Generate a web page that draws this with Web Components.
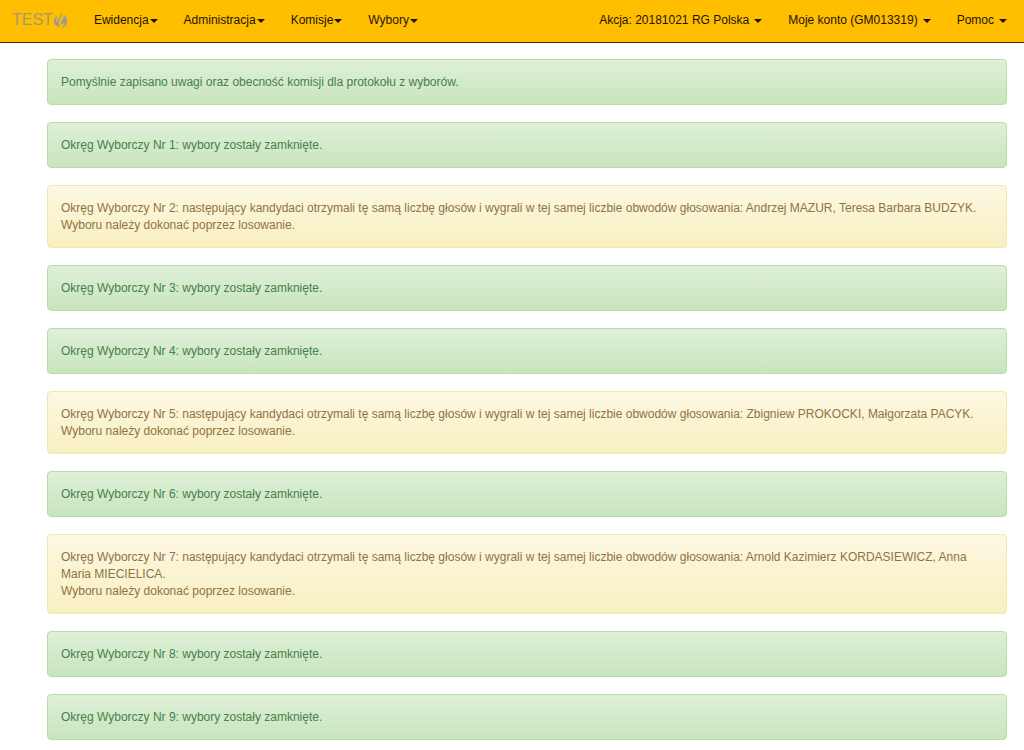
<!DOCTYPE html>
<html lang="pl">
<head>
<meta charset="utf-8">
<meta name="viewport" content="width=device-width, initial-scale=1">
<title>Wybory – protokół</title>
<style>
  body { margin: 0; background: #fff; font: 12px/17px "Liberation Sans", Arial, sans-serif; }
</style>
</head>
<body>
<election-app></election-app>

<template id="app-template">
  <style>
    :host { display: block; }
    main { display: flex; flex-direction: column; gap: 17px; padding: 16px 17px 10px 47px; }
  </style>
  <top-bar>
    <brand-logo slot="brand">TEST</brand-logo>
    <menu-item slot="start" tight>Ewidencja</menu-item>
    <menu-item slot="start" tight>Administracja</menu-item>
    <menu-item slot="start" tight>Komisje</menu-item>
    <menu-item slot="start" tight>Wybory</menu-item>
    <menu-item slot="end">Akcja: 20181021 RG Polska</menu-item>
    <menu-item slot="end">Moje konto (GM013319)</menu-item>
    <menu-item slot="end">Pomoc</menu-item>
  </top-bar>
  <main>
    <alert-box>Pomyślnie zapisano uwagi oraz obecność komisji dla protokołu z wyborów.</alert-box>
    <alert-box>Okręg Wyborczy Nr 1: wybory zostały zamknięte.</alert-box>
    <alert-box kind="warning">Okręg Wyborczy Nr 2: następujący kandydaci otrzymali tę samą liczbę głosów i wygrali w tej samej liczbie obwodów głosowania: Andrzej MAZUR, Teresa Barbara BUDZYK.<br>Wyboru należy dokonać poprzez losowanie.</alert-box>
    <alert-box>Okręg Wyborczy Nr 3: wybory zostały zamknięte.</alert-box>
    <alert-box>Okręg Wyborczy Nr 4: wybory zostały zamknięte.</alert-box>
    <alert-box kind="warning">Okręg Wyborczy Nr 5: następujący kandydaci otrzymali tę samą liczbę głosów i wygrali w tej samej liczbie obwodów głosowania: Zbigniew PROKOCKI, Małgorzata PACYK.<br>Wyboru należy dokonać poprzez losowanie.</alert-box>
    <alert-box>Okręg Wyborczy Nr 6: wybory zostały zamknięte.</alert-box>
    <alert-box kind="warning">Okręg Wyborczy Nr 7: następujący kandydaci otrzymali tę samą liczbę głosów i wygrali w tej samej liczbie obwodów głosowania: Arnold Kazimierz KORDASIEWICZ, Anna Maria MIECIELICA.<br>Wyboru należy dokonać poprzez losowanie.</alert-box>
    <alert-box>Okręg Wyborczy Nr 8: wybory zostały zamknięte.</alert-box>
    <alert-box>Okręg Wyborczy Nr 9: wybory zostały zamknięte.</alert-box>
  </main>
</template>

<template id="bar-template">
  <style>
    :host { display: block; background: #ffbf00; border-bottom: 1px solid #3c2c08; }
    nav, div { display: flex; align-items: center; }
    nav { min-height: 42px; padding: 0 17px 2px 12px; justify-content: space-between; box-sizing: border-box; }
    div { gap: 26px; }
  </style>
  <nav aria-label="Menu główne">
    <div><slot name="brand"></slot><slot name="start"></slot></div>
    <div><slot name="end"></slot></div>
  </nav>
</template>

<template id="logo-template">
  <style>
    :host { display: block; }
    a { display: flex; align-items: center; color: #a89878; font-size: 16px; line-height: 18px; text-decoration: none; }
    svg { width: 15px; height: 17px; fill: #a59a8c; }
  </style>
  <a href="#"><slot></slot><svg viewBox="0 0 15 17" aria-hidden="true"><path d="M7.500 0C9.200 2.400 8.800 4.700 7.400 6.600 6 8.600 5.400 10.200 6.200 12.300 6.600 13.600 7.300 14.500 8 15.200 4 15 .7 12.700.7 9.300.7 6.900 2.500 5.500 3.300 3.600 4 4.800 4 6 3.400 7.600 3 8.900 3.400 9.800 4.100 10.600 4 8.500 5.100 7 6.400 5.200 7.500 3.600 8 2 7.500 0ZM10.700 2.200C13 4.200 14.500 6.700 14.300 9.700 14.100 12.500 12 14.800 8.900 16 10.600 14.200 11.200 12.600 10.800 10.600 10.300 11.900 9.600 12.700 8.500 13.100 7.400 10.800 8.100 9.100 9.400 7.300 10.700 5.600 11.300 4.200 10.700 2.200Z"/></svg></a>
</template>

<template id="menu-template">
  <style>
    :host { display: block; --caret-gap: 5px; }
    :host([tight]) { --caret-gap: 1px; }
    button { display: flex; align-items: center; gap: var(--caret-gap); margin: 0; padding: 0; border: 0; background: none; color: #1c1400; font: inherit; white-space: nowrap; cursor: pointer; }
    i { margin-top: 2px; border: solid transparent; border-width: 4px 4px 0; border-top-color: currentColor; }
  </style>
  <button type="button" aria-haspopup="true"><span><slot></slot></span><i></i></button>
</template>

<template id="alert-template">
  <style>
    :host { display: block; padding: 14px 13px 13px; border: 1px solid #b9dcab; border-radius: 4px; color: #46804a; background: linear-gradient(#dff0d8, #c8e5bc); }
    :host([kind="warning"]) { border-color: #f3e7a9; color: #8e7344; background: linear-gradient(#fcf8e3, #f8efc0); }
  </style>
  <slot></slot>
</template>

<script>
  class TemplateElement extends HTMLElement {
    constructor() {
      super();
      const template = document.getElementById(this.constructor.template);
      this.attachShadow({ mode: "open" }).append(template.content.cloneNode(true));
    }
  }
  customElements.define("brand-logo", class extends TemplateElement { static template = "logo-template"; });
  customElements.define("menu-item", class extends TemplateElement { static template = "menu-template"; });
  customElements.define("top-bar", class extends TemplateElement { static template = "bar-template"; });
  customElements.define("alert-box", class extends TemplateElement {
    static template = "alert-template";
    connectedCallback() { this.setAttribute("role", "alert"); }
  });
  customElements.define("election-app", class extends TemplateElement { static template = "app-template"; });
</script>
</body>
</html>
